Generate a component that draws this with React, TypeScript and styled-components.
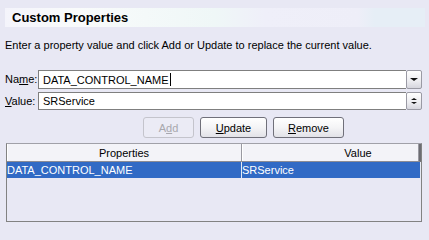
import { createGlobalStyle, styled } from "styled-components";

const Global = createGlobalStyle`
  html, body {
    margin: 0;
    padding: 0;
    background: #e8e8f4;
  }
  body {
    font-family: "Liberation Sans", Arial, sans-serif;
    font-size: 11px;
    color: #000;
  }
`;

const Page = styled.div`
  width: 429px;
  height: 228px;
  padding: 8px 0 0 5px;
  box-sizing: border-box;
  display: flex;
  flex-direction: column;
  overflow: hidden;
`;

const TitleBar = styled.div`
  width: 420px;
  height: 19px;
  flex: none;
  box-sizing: border-box;
  padding-left: 7px;
  display: flex;
  align-items: center;
  font-size: 13px;
  font-weight: bold;
  background: linear-gradient(
    to right,
    #f4f4fb 0%,
    #f9fbfb 17%,
    #eff7f7 50%,
    #efeff9 62%,
    #eeeef8 84%,
    #e6eef6 88%,
    #e6eef6 100%
  );
`;

const Intro = styled.div`
  margin-top: 12px;
  height: 13px;
  flex: none;
  line-height: 13px;
`;

const FieldRow = styled.div<{ $top: number }>`
  display: flex;
  align-items: center;
  flex: none;
  margin-top: ${(p) => p.$top}px;
`;

const Label = styled.span`
  width: 33px;
  flex: none;
  line-height: 13px;
`;

const Input = styled.div<{ $h: number }>`
  width: 368px;
  height: ${(p) => p.$h}px;
  box-sizing: border-box;
  border: 1px solid #7f7f7f;
  border-right: none;
  background: #fff;
  padding-left: 4px;
  display: flex;
  align-items: center;
`;

const Caret = styled.span`
  display: inline-block;
  width: 1px;
  height: 13px;
  background: #000;
  margin-left: 1px;
`;

const SideButton = styled.div<{ $h: number }>`
  width: 16px;
  height: ${(p) => p.$h}px;
  box-sizing: border-box;
  border: 1px solid #9a9aa4;
  border-radius: 2px;
  background: linear-gradient(to bottom, #ffffff, #ececf0 60%, #d6d6de);
  display: flex;
  flex-direction: column;
  align-items: center;
  justify-content: center;
`;

const Arrow = styled.div<{ $up?: boolean; $size: number }>`
  width: 0;
  height: 0;
  border-left: ${(p) => p.$size}px solid transparent;
  border-right: ${(p) => p.$size}px solid transparent;
  ${(p) =>
    p.$up
      ? `border-bottom: ${p.$size - 1}px solid #111;`
      : `border-top: ${p.$size - 1}px solid #111;`}
  margin: 1px 0;
`;

const ButtonRow = styled.div`
  display: flex;
  flex: none;
  gap: 6px;
  margin-top: 7px;
  padding-left: 138px;
`;

const Button = styled.button<{ $w: number }>`
  width: ${(p) => p.$w}px;
  height: 21px;
  box-sizing: border-box;
  border: 1px solid #70707a;
  border-radius: 3px;
  background: linear-gradient(to bottom, #ffffff 0%, #f4f4f6 50%, #e2e2e8 100%);
  font-family: "Liberation Sans", Arial, sans-serif;
  font-size: 11px;
  color: #000;
  padding: 0;
  &:disabled {
    border-color: #c4c4cc;
    color: #a8a8ae;
    background: #ebebf5;
  }
`;

const Table = styled.div`
  margin-top: 5px;
  margin-left: 1px;
  width: 416px;
  height: 79px;
  flex: none;
  box-sizing: border-box;
  border: 1px solid #828282;
  border-top-color: #a0a0a8;
`;

const HeadRow = styled.div`
  display: grid;
  grid-template-columns: 235px 1fr;
  height: 18px;
  box-sizing: border-box;
  background: #f3f3f8;
  border-bottom: 1px solid #8c8c94;
  border-right: 2px solid #6c6c72;
`;

const HeadCell = styled.div<{ $pad?: number }>`
  display: flex;
  align-items: center;
  justify-content: center;
  padding-left: ${(p) => p.$pad ?? 0}px;
  border-right: 1px solid #9a9aa2;
  box-shadow: inset 1px 0 0 #fff;
`;

const Row = styled.div`
  display: grid;
  grid-template-columns: 235px 1fr;
  height: 16px;
  background: #316ac5;
  color: #fff;
`;

const Cell = styled.div`
  display: flex;
  align-items: center;
  border-right: 1px solid #e6eaf4;
`;

const U = styled.span`
  text-decoration: underline;
`;

export default function App() {
  return (
    <>
      <Global />
      <Page>
        <TitleBar>Custom Properties</TitleBar>
        <Intro>Enter a property value and click Add or Update to replace the current value.</Intro>
        <FieldRow $top={18}>
          <Label>
            Na<U>m</U>e:
          </Label>
          <Input $h={19}>
            DATA_CONTROL_NAME
            <Caret />
          </Input>
          <SideButton $h={19}>
            <Arrow $size={4} />
          </SideButton>
        </FieldRow>
        <FieldRow $top={3}>
          <Label>
            <U>V</U>alue:
          </Label>
          <Input $h={18}>SRService</Input>
          <SideButton $h={18}>
            <Arrow $up $size={3} />
            <Arrow $size={3} />
          </SideButton>
        </FieldRow>
        <ButtonRow>
          <Button $w={51} disabled>
            A<U>d</U>d
          </Button>
          <Button $w={67}>
            <U>U</U>pdate
          </Button>
          <Button $w={71}>
            <U>R</U>emove
          </Button>
        </ButtonRow>
        <Table>
          <HeadRow>
            <HeadCell>Properties</HeadCell>
            <HeadCell $pad={56}>Value</HeadCell>
          </HeadRow>
          <Row>
            <Cell>DATA_CONTROL_NAME</Cell>
            <Cell>SRService</Cell>
          </Row>
        </Table>
      </Page>
    </>
  );
}
